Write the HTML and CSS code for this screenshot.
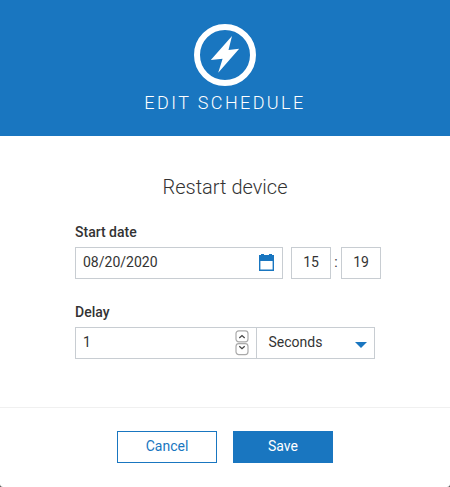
FILE: index.html
```html
<!DOCTYPE html>
<html lang="en">
<head>
<meta charset="utf-8">
<title>Edit schedule</title>
<link rel="stylesheet" href="styles.css">
</head>
<body>
<form class="dialog">
  <header class="header">
    <svg class="logo" width="62" height="62" viewBox="0 0 62 62">
      <circle cx="31" cy="31" r="28" fill="none" stroke="#fff" stroke-width="6"/>
      <path d="M38 12L34.5 26L45.2 24.7L24.2 48.8L28.6 34.8L16.8 36Z" fill="#fff"/>
    </svg>
    <h1 class="title">EDIT SCHEDULE</h1>
  </header>
  <main class="body">
    <h2 class="subtitle">Restart device</h2>
    <div class="label">Start date</div>
    <div class="row">
      <div class="field date">08/20/2020
        <svg width="15" height="17" viewBox="0 0 15 17"><path fill="#1976c0" fill-rule="evenodd" d="M0 1H2V0H5V1H10V0H13V1H15V17H0ZM1.4 7V15.5H13.6V7Z"/></svg>
      </div>
      <div class="field time">15</div>
      <span class="colon">:</span>
      <div class="field time">19</div>
    </div>
    <div class="label">Delay</div>
    <div class="row">
      <div class="field delay">1
        <svg width="14" height="26" viewBox="0 0 14 26" fill="none">
          <rect x="1" y=".8" width="12" height="11" rx="2.8" stroke="#aaa" stroke-width="1.2"/>
          <rect x="1" y="13.6" width="12" height="11" rx="2.8" stroke="#aaa" stroke-width="1.2"/>
          <path d="M4.3 8L7 5.6L9.7 8M4.3 16.3L7 18.7L9.7 16.3" stroke="#444" stroke-width="1.3"/>
        </svg>
      </div>
      <div class="field unit">Seconds
        <svg width="12" height="6" viewBox="0 0 12 6"><path d="M0 0H12L6 6Z" fill="#1976c0"/></svg>
      </div>
    </div>
  </main>
  <footer class="footer">
    <button type="button" class="button">Cancel</button>
    <button type="button" class="button primary">Save</button>
  </footer>
</form>
</body>
</html>
```
FILE: styles.css
```css
* { box-sizing: border-box; }
html { background: #555; }
body { margin: 0; font: 14px/20px Roboto, sans-serif; color: #333; }
.dialog { height: 487px; display: flex; flex-direction: column; background: #fff; border-radius: 0 0 3px 3px; overflow: hidden; }
.header { height: 136px; padding-top: 24px; background: #1976c0; color: #fff; display: flex; flex-direction: column; align-items: center; }
.logo { display: block; }
.title { margin: 5px 0 0; font-size: 18px; line-height: 24px; font-weight: 300; letter-spacing: 2.4px; }
.body { height: 271px; padding: 39px 69px 0 75px; }
.subtitle { margin: 0 6px 23px 0; line-height: 24px; font-size: 20px; font-weight: 300; text-align: center; }
.label { margin: 0 0 5px; font-weight: 500; }
.row { display: flex; height: 32px; margin-bottom: 23px; }
.field { height: 32px; display: flex; align-items: center; justify-content: space-between; border: 1px solid #c8cdd2; padding: 0 7px 2px; }
.date { width: 208px; margin-right: 8px; padding-right: 8px; }
.date svg { position: relative; top: .5px; }
.time { width: 40px; justify-content: center; }
.colon { width: 10px; text-align: center; line-height: 30px; }
.delay { width: 182px; }
.delay svg { position: relative; top: 1px; }
.unit { width: 119px; margin-left: -1px; padding-left: 11.5px; }
.unit svg { position: relative; top: 3px; }
.footer { flex: 1; border-top: 1px solid #f0f0f0; display: flex; justify-content: center; align-items: flex-start; gap: 16px; padding-top: 23px; }
.button { width: 100px; height: 32px; padding: 0 0 2px; border: 1px solid #1976c0; background: #fff; color: #1976c0; font: inherit; }
.primary { background: #1976c0; color: #fff; }
```
